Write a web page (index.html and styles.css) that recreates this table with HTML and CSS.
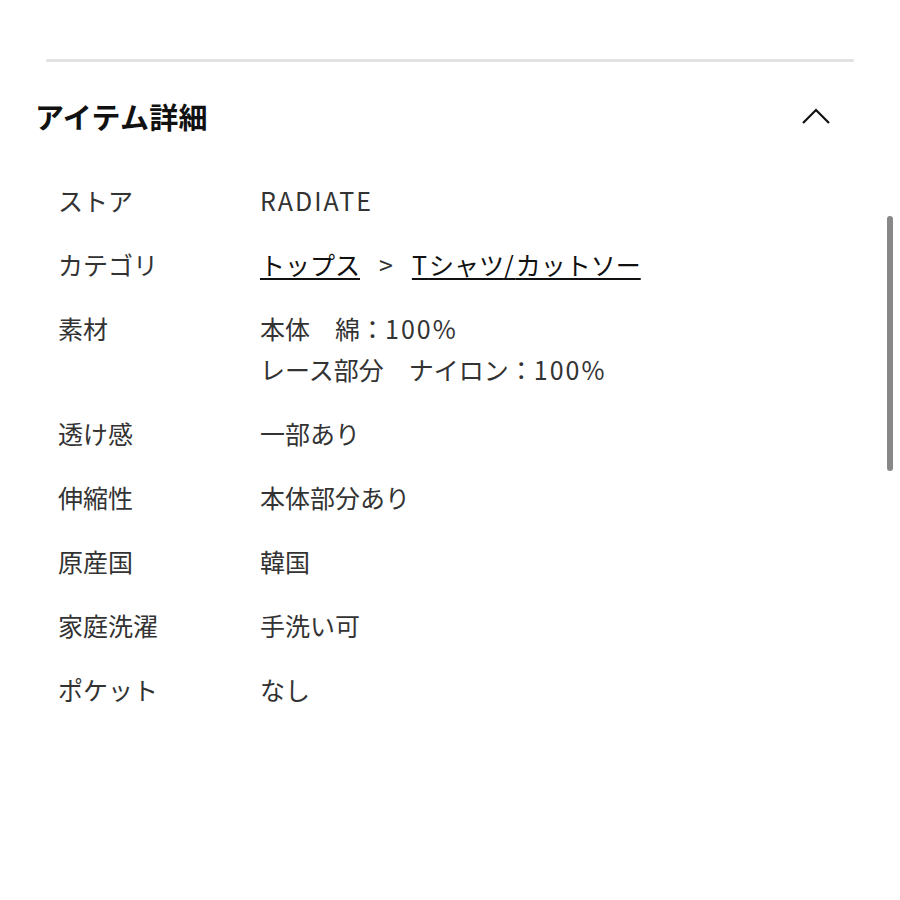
FILE: index.html
```html
<!DOCTYPE html>
<html lang="ja">
<head>
<meta charset="utf-8">
<link rel="stylesheet" href="styles.css">
</head>
<body>
<div class="page">
  <div class="divider"></div>
  <div class="header">
    <h2 class="title">アイテム詳細</h2>
    <svg class="chevron" width="28" height="16" viewBox="0 0 28 16"><path d="M1 15 L14 2 L27 15" fill="none" stroke="#111" stroke-width="2.2" stroke-linejoin="miter"/></svg>
  </div>
  <dl class="details">
    <dt>ストア</dt><dd><span class="lt">RADIATE</span></dd>
    <dt>カテゴリ</dt><dd><a class="link">トップス</a><span class="sep">&gt;</span><a class="link"><span class="lt">T</span>シャツ<span class="lt">/</span>カットソー</a></dd>
    <dt>素材</dt><dd>本体　綿：<span class="lt">100%</span><br>レース部分　ナイロン：<span class="lt">100%</span></dd>
    <dt>透け感</dt><dd>一部あり</dd>
    <dt>伸縮性</dt><dd>本体部分あり</dd>
    <dt>原産国</dt><dd>韓国</dd>
    <dt>家庭洗濯</dt><dd>手洗い可</dd>
    <dt>ポケット</dt><dd>なし</dd>
  </dl>
  <div class="scrollbar"></div>
</div>
</body>
</html>
```
FILE: styles.css
```css
html, body {
  margin: 0;
  padding: 0;
  background: #fff;
}
body {
  font-family: "Noto Sans CJK JP", "Noto Sans", sans-serif;
  color: #333;
}
.page {
  position: relative;
  width: 900px;
  height: 900px;
  overflow: hidden;
}
.divider {
  margin: 59px 46px 0;
  height: 3px;
  background: #e2e2e2;
  border-radius: 2px;
}
.header {
  display: flex;
  align-items: center;
  justify-content: space-between;
  padding: 0 70px 0 35px;
  margin-top: 33px;
  height: 42px;
}
.title {
  margin: 0;
  font-size: 29px;
  font-weight: 700;
  color: #111;
  line-height: 42px;
  letter-spacing: 0.3px;
}
.chevron {
  display: block;
  margin-top: 0;
}
.details {
  display: grid;
  grid-template-columns: 202px 1fr;
  row-gap: 23px;
  margin: 43px 0 0 58px;
  font-size: 25px;
  line-height: 41px;
}
.details dt, .details dd {
  margin: 0;
}
.lt {
  letter-spacing: 2px;
}
.link {
  color: #111;
  text-decoration: underline;
  text-decoration-thickness: 2px;
  text-underline-offset: 3px;
}
.sep {
  margin: 0 19px;
}
.scrollbar {
  position: absolute;
  left: 887px;
  top: 216px;
  width: 6px;
  height: 255px;
  border-radius: 3px;
  background: #888;
}
```
